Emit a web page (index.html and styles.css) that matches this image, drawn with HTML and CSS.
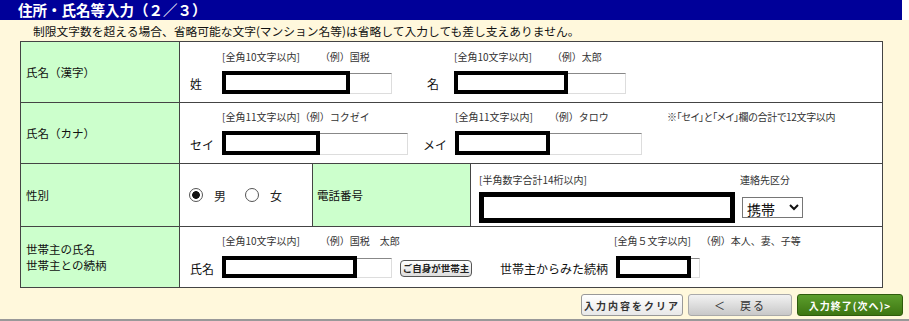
FILE: index.html
```html
<!DOCTYPE html>
<html lang="ja">
<head>
    <meta charset="UTF-8">
    <meta name="viewport" content="width=device-width, initial-scale=1.0">
    <title>住所・氏名等入力</title>
    <link rel="stylesheet" href="styles.css">
</head>
<body>
    <div class="page">
        <div class="title-band">
            <h1 class="title">住所・氏名等入力（２／３）</h1>
        </div>

        <p class="note">制限文字数を超える場合、省略可能な文字(マンション名等)は省略して入力しても差し支えありません。</p>

        <table class="entry-table">
            <colgroup>
                <col class="col-label">
                <col class="col-sex">
                <col class="col-tel">
                <col>
            </colgroup>
            <tr class="row-name">
                <th>氏名（漢字）</th>
                <td colspan="3">
                    <div class="fields fields-kanji">
                        <span class="hint c2">[全角10文字以内]<span class="ex">（例）国税</span></span>
                        <span class="hint c4">[全角10文字以内]<span class="ex">（例）太郎</span></span>
                        <label class="field-label c1" for="sei">姓</label>
                        <span class="field c2 w-170"><input type="text" id="sei"><span class="redact r-128"></span></span>
                        <label class="field-label c3" for="mei">名</label>
                        <span class="field c4 w-172"><input type="text" id="mei"><span class="redact r-114"></span></span>
                    </div>
                </td>
            </tr>
            <tr class="row-name">
                <th>氏名（カナ）</th>
                <td colspan="3">
                    <div class="fields fields-kana">
                        <span class="hint c2">[全角11文字以内]<span class="ex-near">（例）コクゼイ</span></span>
                        <span class="hint c4">[全角11文字以内]<span class="ex-wide">（例）タロウ</span><span class="ex-note">※「セイ」と「メイ」欄の合計で12文字以内</span></span>
                        <label class="field-label c1" for="sei-kana">セイ</label>
                        <span class="field c2 w-186"><input type="text" id="sei-kana"><span class="redact r-98"></span></span>
                        <label class="field-label c3" for="mei-kana">メイ</label>
                        <span class="field c4 w-187"><input type="text" id="mei-kana"><span class="redact r-95"></span></span>
                    </div>
                </td>
            </tr>
            <tr class="row-sex">
                <th>性別</th>
                <td class="sex-cell">
                    <div class="radios">
                        <label><input type="radio" name="sex" checked>男</label>
                        <label><input type="radio" name="sex">女</label>
                    </div>
                </td>
                <th class="tel-label">電話番号</th>
                <td>
                    <div class="tel-fields">
                        <span class="hint">[半角数字合計14桁以内]</span>
                        <span class="hint">連絡先区分</span>
                        <input type="text" class="tel-input">
                        <select class="tel-kind">
                            <option>携帯</option>
                            <option>自宅</option>
                            <option>勤務先</option>
                        </select>
                    </div>
                </td>
            </tr>
            <tr class="row-name">
                <th>世帯主の氏名<br>世帯主との続柄</th>
                <td colspan="3">
                    <div class="fields fields-head">
                        <span class="hint c2 span-2">[全角10文字以内]<span class="ex">（例）国税　太郎</span></span>
                        <span class="hint c5 hint-rel">[全角５文字以内]<span class="ex-mid">（例）本人、妻、子等</span></span>
                        <label class="field-label c1" for="head-name">氏名</label>
                        <span class="field c2 w-170"><input type="text" id="head-name"><span class="redact r-135"></span></span>
                        <button type="button" class="self-btn c3">ご自身が世帯主</button>
                        <label class="field-label c4" for="relation">世帯主からみた続柄</label>
                        <span class="field c5 w-84"><input type="text" id="relation"><span class="redact r-75"></span></span>
                    </div>
                </td>
            </tr>
        </table>

        <div class="actions">
            <button type="button" class="btn btn-clear">入力内容をクリア</button>
            <button type="button" class="btn btn-back">＜　戻る</button>
            <button type="button" class="btn btn-next">入力終了(次へ)&gt;</button>
        </div>
    </div>
</body>
</html>
```

FILE: styles.css
```css
* {
    margin: 0;
    padding: 0;
    box-sizing: border-box;
}

body {
    font-family: "Noto Sans CJK JP", "Noto Sans", sans-serif;
    background: #fff8dc;
    color: #222;
}

.page {
    height: 321px;
    border-bottom: 2px solid #999;
}

.title-band {
    background: #fff;
}

.title {
    width: 902px;
    height: 20px;
    background: #000099;
    color: #fff;
    font-size: 14.5px;
    font-weight: bold;
    line-height: 20px;
    padding-left: 18px;
}

.note {
    font-size: 11.75px;
    line-height: 21px;
    padding-left: 33px;
    color: #111;
}

/* entry table */
.entry-table {
    margin-left: 20px;
    width: 863px;
    border-collapse: collapse;
    table-layout: fixed;
    border: 1px solid #444;
}

.col-label {
    width: 159px;
}

.col-sex {
    width: 133px;
}

.col-tel {
    width: 158px;
}

.entry-table th,
.entry-table td {
    border: 1px solid #444;
    vertical-align: top;
    text-align: left;
}

.entry-table th {
    background: #ccffcc;
    font-weight: normal;
    font-size: 11.5px;
    line-height: 16px;
    vertical-align: middle;
    padding-left: 5px;
    color: #111;
}

.entry-table td {
    background: #fff;
}

.row-name {
    height: 61px;
}

.row-sex {
    height: 63px;
}

.hint {
    grid-row: 1;
    font-size: 10px;
    line-height: 14px;
    color: #333;
    white-space: nowrap;
}

.ex {
    margin-left: 20px;
}

.ex-near {
    margin-left: 0;
}

.ex-wide {
    margin-left: 16px;
}

.ex-mid {
    margin-left: 10px;
}

.ex-note {
    margin-left: 58px;
    font-feature-settings: "palt";
    letter-spacing: -0.3px;
}

.fields {
    display: grid;
    grid-template-rows: 14px 21px;
    row-gap: 9px;
    align-items: center;
    padding: 8px 0 0 10px;
    font-size: 12px;
}

.fields-kanji {
    grid-template-columns: 32px 205px 27px 1fr;
}

.fields-kana {
    grid-template-columns: 32px 201px 32px 1fr;
    padding-top: 7px;
    grid-template-rows: 14px 22px;
}

.fields-head {
    grid-template-columns: 32px 178px 100px 116px 1fr;
    padding-top: 7px;
    row-gap: 10px;
    grid-template-rows: 14px 20px;
}

.c1 { grid-column: 1; }
.c2 { grid-column: 2; }
.c3 { grid-column: 3; }
.c4 { grid-column: 4; }
.c5 { grid-column: 5; }

.span-2 {
    grid-column: 2 / span 2;
}

.hint-rel {
    margin-left: -2px;
}

.field-label,
.field,
.self-btn {
    grid-row: 2;
}

.field-label {
    font-size: 12px;
    color: #111;
    white-space: nowrap;
}

/* text box with masked value */
.field {
    position: relative;
    display: block;
    height: 100%;
}

.field input {
    display: block;
    width: 100%;
    height: 100%;
    border: 1px solid #ddd;
    border-top-color: #888;
    background: #fff;
}

.redact {
    position: absolute;
    left: 0;
    top: -2px;
    bottom: 0;
    border: 4px solid #000;
    background: #fff;
}

.w-170 { width: 170px; }
.w-172 { width: 172px; }
.w-186 { width: 186px; }
.w-187 { width: 187px; }
.w-84 { width: 84px; }

.r-128 { width: 128px; }
.r-114 { width: 114px; }
.r-98 { width: 98px; }
.r-95 { width: 95px; }
.r-135 { width: 135px; }
.r-75 { width: 75px; }

.self-btn {
    width: 72px;
    height: 17px;
    font-family: inherit;
    font-size: 9.5px;
    font-weight: bold;
    line-height: 13px;
    color: #222;
    background: linear-gradient(#fff, #ddd);
    border: 1px solid #555;
    border-radius: 4px;
    white-space: nowrap;
}

/* sex / phone row */
.sex-cell {
    vertical-align: middle !important;
}

.radios {
    display: flex;
    align-items: center;
    gap: 19px;
    padding-left: 9px;
    font-size: 12px;
}

.radios label {
    display: flex;
    align-items: center;
    gap: 11px;
}

.radios input {
    appearance: none;
    width: 14px;
    height: 14px;
    margin: 0;
    border: 1px solid #555;
    border-radius: 50%;
    background: #fff;
}

.radios input:checked {
    background: radial-gradient(circle, #111 0 3.5px, #fff 4.2px);
}

.tel-label {
    padding-left: 4px !important;
}

.tel-fields {
    display: grid;
    grid-template-columns: 261px auto;
    grid-template-rows: 14px 31px;
    row-gap: 5px;
    align-items: center;
    padding: 9px 0 0 8px;
}

.tel-input {
    width: 256px;
    height: 31px;
    border: 5px solid #000;
    background: #fff;
}

.tel-kind {
    width: 61px;
    height: 21px;
    margin-left: 2px;
    font-family: inherit;
    font-size: 14px;
    border: 1px solid #767676;
    background: #fff;
    color: #111;
}

/* bottom buttons */
.actions {
    display: flex;
    justify-content: flex-end;
    gap: 5px;
    padding: 6px 6px 0 0;
}

.btn {
    height: 22px;
    font-family: inherit;
    font-size: 10px;
    font-weight: bold;
    letter-spacing: 2px;
    border-radius: 3px;
    white-space: nowrap;
}

.btn-clear {
    width: 102px;
    color: #333;
    background: linear-gradient(#fff, #e8e8e8);
    border: 1px solid #999;
}

.btn-back {
    width: 104px;
    color: #333;
    font-weight: normal;
    font-size: 11px;
    background: linear-gradient(#f2f2f2, #c8c8c8);
    border: 1px solid #aaa;
}

.btn-next {
    width: 106px;
    color: #fff;
    letter-spacing: 1px;
    background: linear-gradient(#5c9e2c, #3d7612);
    border: 1px solid #2f5c0c;
}
```
